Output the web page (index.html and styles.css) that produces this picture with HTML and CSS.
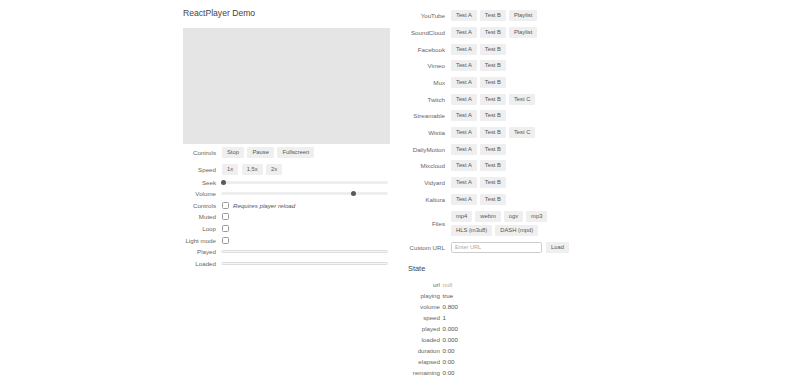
FILE: index.html
```html
<!DOCTYPE html>
<html>
<head>
<meta charset="utf-8">
<link rel="stylesheet" href="styles.css">
</head>
<body>
<div class="app">
  <section class="left">
    <h1 class="title">ReactPlayer Demo</h1>
    <div class="player"></div>
    <div class="lrow tall"><span class="llabel">Controls</span><div class="btns"><button class="btn">Stop</button><button class="btn">Pause</button><button class="btn">Fullscreen</button></div></div>
    <div class="lrow tall"><span class="llabel">Speed</span><div class="btns"><button class="btn">1x</button><button class="btn">1.5x</button><button class="btn">2x</button></div></div>
    <div class="lrow r11"><span class="llabel">Seek</span><div class="slider"><div class="thumb-track"><span class="thumb" style="left:0%"></span></div></div></div>
    <div class="lrow r11"><span class="llabel">Volume</span><div class="slider"><div class="thumb-track"><span class="thumb" style="left:80%"></span></div></div></div>
    <div class="lrow r12"><span class="llabel">Controls</span><input type="checkbox" class="cb"><em class="note">Requires player reload</em></div>
    <div class="lrow r12"><span class="llabel">Muted</span><input type="checkbox" class="cb"></div>
    <div class="lrow r12"><span class="llabel">Loop</span><input type="checkbox" class="cb"></div>
    <div class="lrow r12"><span class="llabel">Light mode</span><input type="checkbox" class="cb"></div>
    <div class="lrow r12"><span class="llabel">Played</span><div class="progress"></div></div>
    <div class="lrow r11"><span class="llabel">Loaded</span><div class="progress"></div></div>
  </section>
  <section class="right">
    <div class="rrow"><span class="rlabel">YouTube</span><div class="btns"><button class="btn">Test A</button><button class="btn">Test B</button><button class="btn">Playlist</button></div></div>
    <div class="rrow"><span class="rlabel">SoundCloud</span><div class="btns"><button class="btn">Test A</button><button class="btn">Test B</button><button class="btn">Playlist</button></div></div>
    <div class="rrow"><span class="rlabel">Facebook</span><div class="btns"><button class="btn">Test A</button><button class="btn">Test B</button></div></div>
    <div class="rrow"><span class="rlabel">Vimeo</span><div class="btns"><button class="btn">Test A</button><button class="btn">Test B</button></div></div>
    <div class="rrow"><span class="rlabel">Mux</span><div class="btns"><button class="btn">Test A</button><button class="btn">Test B</button></div></div>
    <div class="rrow"><span class="rlabel">Twitch</span><div class="btns"><button class="btn">Test A</button><button class="btn">Test B</button><button class="btn">Test C</button></div></div>
    <div class="rrow"><span class="rlabel">Streamable</span><div class="btns"><button class="btn">Test A</button><button class="btn">Test B</button></div></div>
    <div class="rrow"><span class="rlabel">Wistia</span><div class="btns"><button class="btn">Test A</button><button class="btn">Test B</button><button class="btn">Test C</button></div></div>
    <div class="rrow"><span class="rlabel">DailyMotion</span><div class="btns"><button class="btn">Test A</button><button class="btn">Test B</button></div></div>
    <div class="rrow"><span class="rlabel">Mixcloud</span><div class="btns"><button class="btn">Test A</button><button class="btn">Test B</button></div></div>
    <div class="rrow"><span class="rlabel">Vidyard</span><div class="btns"><button class="btn">Test A</button><button class="btn">Test B</button></div></div>
    <div class="rrow"><span class="rlabel">Kaltura</span><div class="btns"><button class="btn">Test A</button><button class="btn">Test B</button></div></div>
    <div class="rrow files"><span class="rlabel">Files</span><div class="btns wrap"><button class="btn">mp4</button><button class="btn">webm</button><button class="btn">ogv</button><button class="btn">mp3</button><button class="btn">HLS (m3u8)</button><button class="btn">DASH (mpd)</button></div></div>
    <div class="rrow"><span class="rlabel">Custom URL</span><input class="url" type="text" placeholder="Enter URL"><button class="btn load">Load</button></div>
    <h2 class="state-title">State</h2>
    <div class="state">
      <div class="srow"><span class="slabel">url</span><span class="sval muted">null</span></div>
      <div class="srow"><span class="slabel">playing</span><span class="sval">true</span></div>
      <div class="srow"><span class="slabel">volume</span><span class="sval">0.800</span></div>
      <div class="srow"><span class="slabel">speed</span><span class="sval">1</span></div>
      <div class="srow"><span class="slabel">played</span><span class="sval">0.000</span></div>
      <div class="srow"><span class="slabel">loaded</span><span class="sval">0.000</span></div>
      <div class="srow"><span class="slabel">duration</span><span class="sval">0:00</span></div>
      <div class="srow"><span class="slabel">elapsed</span><span class="sval">0:00</span></div>
      <div class="srow"><span class="slabel">remaining</span><span class="sval">0:00</span></div>
    </div>
  </section>
</div>
</body>
</html>
```
FILE: styles.css
```css
* { box-sizing: border-box; }
html, body { margin: 0; padding: 0; background: #fff; }
body {
  font-family: "Liberation Sans", Arial, Helvetica, sans-serif;
  font-size: 6.2px;
  color: #666;
}
.app {
  display: flex;
  align-items: flex-start;
  gap: 18px;
  padding-left: 183px;
}
.left { width: 207px; display: flex; flex-direction: column; }
.title {
  margin: 0;
  height: 28px;
  line-height: 27px;
  font-size: 8.6px;
  font-weight: normal;
  color: #444;
}
.player {
  width: 207px;
  height: 115.5px;
  background: #e5e5e5;
  margin-bottom: 0.5px;
}
.lrow { display: flex; align-items: center; }
.lrow.tall { height: 16.7px; }
.lrow.r11 { height: 11px; }
.lrow.r12 { height: 11.7px; }
.llabel {
  width: 33px;
  margin-right: 5px;
  text-align: right;
  flex: none;
  white-space: nowrap;
}
.btns { display: flex; gap: 3.5px; margin-left: 1px; }
.btns.wrap { flex-wrap: wrap; gap: 3px 3px; margin-left: 0; width: 100px; }
.btn {
  height: 11px;
  padding: 0 5px;
  border: none;
  border-radius: 1px;
  background: #efefef;
  color: #555;
  font-family: inherit;
  font-size: 5.8px;
  line-height: 11px;
  margin: 0;
  cursor: pointer;
}
.slider {
  width: 167px;
  height: 3px;
  border-radius: 2px;
  background: #eee;
}
.thumb-track {
  position: relative;
  width: calc(100% - 5px);
  height: 100%;
}
.thumb {
  position: absolute;
  top: -1px;
  width: 5px;
  height: 5px;
  border-radius: 50%;
  background: #5a5a5a;
}
.cb {
  -webkit-appearance: none;
  appearance: none;
  width: 7px;
  height: 7px;
  margin: 0 0 0 1px;
  border: 1px solid #999;
  border-radius: 1.5px;
  background: #fff;
  flex: none;
}
.note { margin-left: 4px; font-style: italic; color: #555; }
.progress {
  width: 167px;
  height: 3px;
  border: 1px solid #ddd;
  border-radius: 2px;
  background: #f6f6f6;
}
.right { width: 200px; padding-top: 7.4px; }
.rrow { display: flex; align-items: center; height: 16.7px; }
.rrow.files { height: 31.5px; align-items: flex-start; padding-top: 3.7px; }
.rrow.files .rlabel { align-self: center; margin-top: -3.7px; }
.rlabel {
  width: 37px;
  margin-right: 6px;
  text-align: right;
  white-space: nowrap;
  flex: none;
}
.rrow .btns { margin-left: 0; gap: 3px; }
.url {
  width: 91px;
  height: 11px;
  margin: 0;
  padding: 0 3px;
  border: 1px solid #ccc;
  border-radius: 1.5px;
  font-family: inherit;
  font-size: 5.6px;
  color: #333;
  background: #fff;
  outline: none;
}
.url::placeholder { color: #aaa; }
.load { margin-left: 4px; }
.state-title {
  margin: 4px 0 0.75px;
  line-height: 18px;
  font-size: 7.4px;
  font-weight: normal;
  color: #444;
}
.srow { display: flex; align-items: center; height: 11.1px; }
.slabel { width: 32px; text-align: right; margin-right: 2.5px; flex: none; }
.sval { color: #555; }
.sval.muted { color: #aaa; }
```
